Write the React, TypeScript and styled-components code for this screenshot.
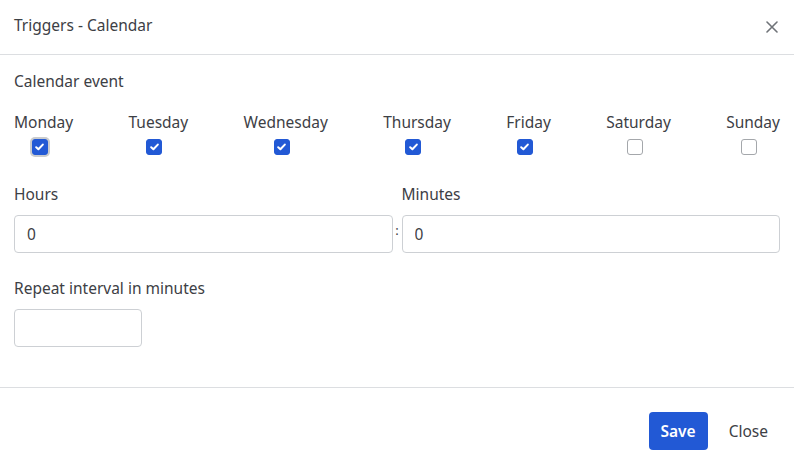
import React, { useState } from 'react';
import styled, { createGlobalStyle } from 'styled-components';

const GlobalStyle = createGlobalStyle`
  html, body {
    margin: 0;
    padding: 0;
    background: #fff;
  }
  body {
    font-family: 'Noto Sans', 'Open Sans', sans-serif;
    font-size: 15.5px;
    line-height: 20px;
    color: #3d4045;
  }
  * {
    box-sizing: border-box;
  }
`;

const DAYS = [
  { name: 'Monday', checked: true, focused: true },
  { name: 'Tuesday', checked: true },
  { name: 'Wednesday', checked: true },
  { name: 'Thursday', checked: true },
  { name: 'Friday', checked: true },
  { name: 'Saturday', checked: false },
  { name: 'Sunday', checked: false },
];

function App() {
  const [days, setDays] = useState(DAYS);

  const toggle = (i: number) => {
    setDays(days.map((d, idx) => (idx === i ? { ...d, checked: !d.checked } : d)));
  };

  return (
    <Modal>
      <GlobalStyle />
      <Header>
        <Title>Triggers - Calendar</Title>
        <CloseIcon aria-label="Close">
          <svg width="12" height="12" viewBox="0 0 12 12">
            <path d="M1 1 L11 11 M11 1 L1 11" stroke="#6f7378" strokeWidth="1.6" strokeLinecap="round" />
          </svg>
        </CloseIcon>
      </Header>
      <Body>
        <SectionLabel>Calendar event</SectionLabel>
        <DayRow>
          {days.map((d, i) => (
            <Day key={d.name}>
              <DayName>{d.name}</DayName>
              <Check $checked={d.checked} $focused={!!d.focused} onClick={() => toggle(i)}>
                {d.checked && (
                  <svg width="9" height="8" viewBox="0 0 9 8">
                    <path d="M1.2 4.2 L3.4 6.3 L7.8 1.6" fill="none" stroke="#fff" strokeWidth="2" strokeLinecap="round" strokeLinejoin="round" />
                  </svg>
                )}
              </Check>
            </Day>
          ))}
        </DayRow>
        <TimeGrid>
          <FieldLabel>Hours</FieldLabel>
          <span />
          <FieldLabel>Minutes</FieldLabel>
          <Input defaultValue="0" />
          <Colon>:</Colon>
          <Input defaultValue="0" />
        </TimeGrid>
        <RepeatLabel>Repeat interval in minutes</RepeatLabel>
        <SmallInput />
      </Body>
      <Footer>
        <SaveButton>Save</SaveButton>
        <LinkButton>Close</LinkButton>
      </Footer>
    </Modal>
  );
}

export default App;

const Modal = styled.div`
  width: 794px;
  height: 463px;
  background: #fff;
  overflow: hidden;
`;
const Header = styled.div`
  display: flex;
  justify-content: space-between;
  align-items: center;
  height: 55px;
  padding: 0 16px 5px 14px;
  border-bottom: 1px solid #dcdee1;
`;
const Title = styled.h5`
  margin: 0;
  font-size: 15.5px;
  font-weight: 400;
  line-height: 20px;
  color: #3d4045;
`;
const CloseIcon = styled.button`
  display: flex;
  border: 0;
  background: none;
  padding: 0;
  margin-top: 5px;
  cursor: pointer;
`;
const Body = styled.div`
  padding: 16px 14px 40px;
`;
const SectionLabel = styled.div`
  margin-bottom: 21px;
`;
const DayRow = styled.div`
  display: flex;
  justify-content: space-between;
  margin-bottom: 29px;
`;
const Day = styled.div`
  display: flex;
  flex-direction: column;
  align-items: center;
`;
const DayName = styled.span`
  margin-bottom: 7px;
`;
const Check = styled.span<{ $checked: boolean; $focused: boolean }>`
  display: flex;
  align-items: center;
  justify-content: center;
  width: 16px;
  height: 16px;
  margin-right: 8px;
  border-radius: 3px;
  border: 1px solid ${(p) => (p.$checked ? '#2259d5' : '#a4a7ab')};
  background: ${(p) => (p.$checked ? '#2259d5' : '#fff')};
  box-shadow: ${(p) => (p.$focused ? 'inset 0 0 0 1px #2259d5, 0 0 0 2px #c9cbce' : 'none')};
  cursor: pointer;
`;
const TimeGrid = styled.div`
  display: grid;
  grid-template-columns: 1fr 9px 1fr;
  row-gap: 11px;
  margin-bottom: 25px;
`;
const FieldLabel = styled.label`
  display: block;
`;
const Colon = styled.span`
  display: flex;
  align-items: center;
  justify-content: center;
  font-size: 13px;
  padding-bottom: 8px;
`;
const Input = styled.input`
  width: 100%;
  height: 38px;
  padding: 0 12px;
  border: 1px solid #cdd0d4;
  border-radius: 4px;
  font-family: inherit;
  font-size: 15.5px;
  color: #3d4045;
  outline: none;
`;
const RepeatLabel = styled.label`
  display: block;
  margin-bottom: 11px;
`;
const SmallInput = styled(Input)`
  width: 128px;
`;
const Footer = styled.div`
  display: flex;
  justify-content: flex-end;
  align-items: center;
  gap: 9px;
  padding: 24px 14px;
  border-top: 1px solid #dcdee1;
`;
const SaveButton = styled.button`
  height: 38px;
  padding: 0 12px;
  border: 0;
  border-radius: 4px;
  background: #2259d5;
  color: #fff;
  font-family: inherit;
  font-size: 15.5px;
  font-weight: 600;
  cursor: pointer;
`;
const LinkButton = styled.button`
  height: 38px;
  padding: 0 12px;
  border: 0;
  background: none;
  color: #3d4045;
  font-family: inherit;
  font-size: 15.5px;
  cursor: pointer;
`;
